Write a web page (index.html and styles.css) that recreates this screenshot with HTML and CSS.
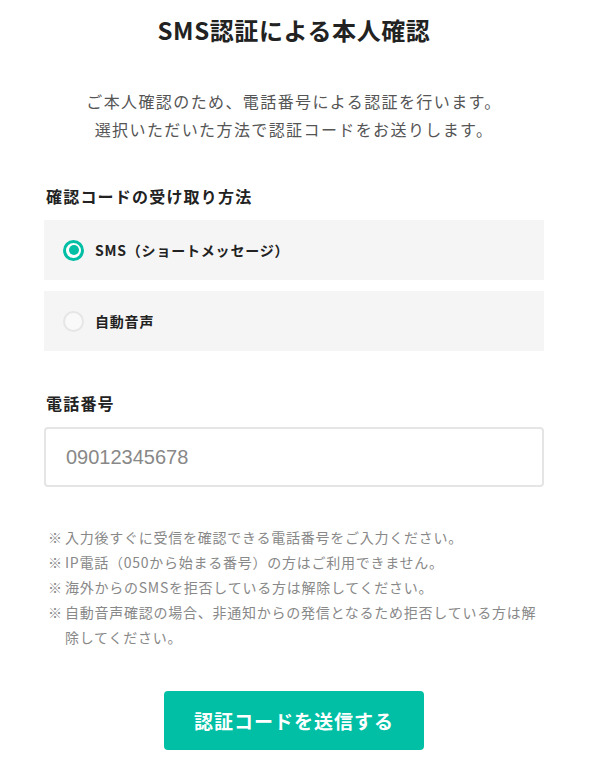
FILE: index.html
```html
<!DOCTYPE html>
<html lang="ja">
<head>
<meta charset="utf-8">
<link rel="stylesheet" href="styles.css">
</head>
<body>
<main class="page">
  <h1 class="title">SMS認証による本人確認</h1>
  <p class="lead">ご本人確認のため、電話番号による認証を行います。<br>選択いただいた方法で認証コードをお送りします。</p>

  <h2 class="label">確認コードの受け取り方法</h2>
  <div class="options">
    <label class="option">
      <span class="radio checked"></span>
      <span class="option-text">SMS（ショートメッセージ）</span>
    </label>
    <label class="option">
      <span class="radio"></span>
      <span class="option-text">自動音声</span>
    </label>
  </div>

  <h2 class="label phone-label">電話番号</h2>
  <div class="input">09012345678</div>

  <ul class="notes">
    <li>入力後すぐに受信を確認できる電話番号をご入力ください。</li>
    <li>IP電話（050から始まる番号）の方はご利用できません。</li>
    <li>海外からのSMSを拒否している方は解除してください。</li>
    <li>自動音声確認の場合、非通知からの発信となるため拒否している方は解除してください。</li>
  </ul>

  <div class="actions">
    <button class="submit">認証コードを送信する</button>
  </div>
</main>
</body>
</html>
```

FILE: styles.css
```css
* { box-sizing: border-box; }
body {
  margin: 0;
  background: #fff;
  font-family: "Noto Sans CJK JP", "Liberation Sans", sans-serif;
  color: #333;
}
.page {
  width: 500px;
  margin-left: 44px;
  padding-top: 12px;
}
.title {
  margin: 0;
  text-align: center;
  font-size: 24px;
  line-height: 36px;
  font-weight: 700;
  letter-spacing: 0.6px;
  color: #222;
}
.lead {
  margin: 39px 0 0;
  text-align: center;
  font-size: 16px;
  line-height: 28px;
  letter-spacing: 1.4px;
  color: #555;
}
.label {
  margin: 41px 0 0 2px;
  font-size: 16px;
  line-height: 24px;
  font-weight: 700;
  letter-spacing: 1.2px;
  color: #222;
}
.options {
  margin-top: 12px;
  display: flex;
  flex-direction: column;
  gap: 11px;
}
.option {
  height: 60px;
  background: #f5f5f5;
  display: flex;
  align-items: center;
  padding-left: 19px;
  gap: 11px;
}
.radio {
  width: 21px;
  height: 21px;
  border-radius: 50%;
  border: 2px solid #e6e6e6;
  background: #f9f9f9;
  position: relative;
  flex: none;
}
.radio.checked {
  border: 3px solid #00bfa5;
  background: #fff;
}
.radio.checked::after {
  content: "";
  position: absolute;
  left: 2.5px; top: 2.5px;
  width: 10px; height: 10px;
  border-radius: 50%;
  background: #00bfa5;
}
.option-text {
  font-size: 14px;
  font-weight: 700;
  letter-spacing: 0.8px;
  color: #222;
}
.phone-label { margin-top: 40px; }
.input {
  margin-top: 12px;
  height: 60px;
  border: 2px solid #e5e5e5;
  border-radius: 4px;
  display: flex;
  align-items: center;
  padding-left: 20px;
  font-family: "Liberation Sans", sans-serif;
  font-size: 20px;
  color: #888;
}
.notes {
  list-style: none;
  margin: 38px 0 0;
  padding: 0 0 0 21px;
  font-size: 14px;
  line-height: 25px;
  letter-spacing: 0.75px;
  color: #888;
}
.notes li { position: relative; }
.notes li::before {
  content: "※";
  position: absolute;
  left: -17px;
}
.actions {
  margin-top: 41px;
  display: flex;
  justify-content: center;
}
.submit {
  width: 260px;
  height: 59px;
  border: 0;
  border-radius: 4px;
  background: #00bfa5;
  color: #fff;
  font-family: "Noto Sans CJK JP", sans-serif;
  font-size: 19px;
  letter-spacing: 1px;
  font-weight: 700;
}
```
